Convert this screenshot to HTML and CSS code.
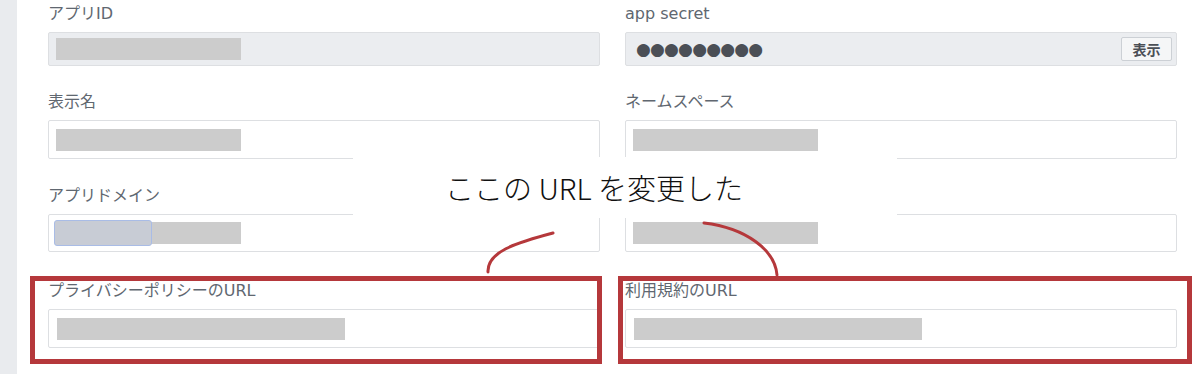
FILE: index.html
```html
<!DOCTYPE html>
<html>
<head>
	<meta charset="UTF-8">
	<title>基本設定</title>
	<link rel="stylesheet" href="styles.css">
</head>
<body>
	<div class="page">
		<div class="side"></div>
		<div class="main">
			<div class="field">
				<div class="label">アプリID</div>
				<div class="input disabled short"><span class="mask"></span></div>
			</div>
			<div class="field">
				<div class="label">app secret</div>
				<div class="input disabled short secret">
					<span class="dots">●●●●●●●●●</span>
					<span class="btn">表示</span>
				</div>
			</div>

			<div class="field">
				<div class="label">表示名</div>
				<div class="input"><span class="mask"></span></div>
			</div>
			<div class="field">
				<div class="label">ネームスペース</div>
				<div class="input"><span class="mask"></span></div>
			</div>

			<div class="field r3">
				<div class="label">アプリドメイン</div>
				<div class="input mid"><span class="mask"><span class="sel"></span></span></div>
			</div>
			<div class="field r3">
				<!-- ラベルは注釈の下に隠れている -->
				<div class="label"></div>
				<div class="input mid"><span class="mask"></span></div>
			</div>

			<div class="field r4">
				<div class="label">プライバシーポリシーのURL</div>
				<div class="input url"><span class="mask long"></span></div>
			</div>
			<div class="field r4">
				<div class="label">利用規約のURL</div>
				<div class="input url"><span class="mask long"></span></div>
			</div>
		</div>

		<!-- 注釈 -->
		<div class="callout">ここの URL を変更した</div>
		<div class="mark mark-left"></div>
		<div class="mark mark-right"></div>
		<svg class="arcs" width="1200" height="374" viewBox="0 0 1200 374">
			<path d="M553 233 C515 243 487 252 488 272" />
			<path d="M704 223 C746 228 775 250 777 275" />
		</svg>
	</div>
</body>
</html>
```

FILE: styles.css
```css
body{
	margin: 0;
	padding: 0;
	background: #fff;
}
.page{
	width: 1200px;
	height: 374px;
	position: relative;
	overflow: hidden;
	display: flex;
	font-family: "DejaVu Sans", "Noto Sans CJK JP", sans-serif;
}
.side{
	width: 17px;
	flex: none;
	background: #e9ebee;
}
.main{
	padding: 5px 23px 0 31px;
	display: grid;
	grid-template-columns: 552px 552px;
	column-gap: 25px;
	row-gap: 27px;
	align-content: start;
}
.field .label{
	font-size: 16px;
	line-height: 18px;
	height: 18px;
	margin-bottom: 9px;
	color: #606770;
	white-space: nowrap;
}
.r3{
	margin-top: 1px;
}
.r4{
	margin-top: 3px;
}
.input{
	height: 39px;
	box-sizing: border-box;
	border: 1px solid #dddfe2;
	border-radius: 2px;
	background: #fff;
	padding: 0 7px;
	display: flex;
	align-items: center;
}
.input.short{
	height: 34px;
}
.input.mid{
	height: 38px;
}
.input.url{
	padding-left: 8px;
}
.input.disabled{
	background: #ebedf0;
}
.mask{
	display: block;
	width: 185px;
	height: 22px;
	background: #cccccc;
}
.mask.long{
	width: 288px;
}
.mask .sel{
	display: block;
	width: 98px;
	height: 26px;
	margin: -2px 0 0 -2px;
	box-sizing: border-box;
	border: 1px solid #a9bce6;
	border-radius: 3px;
	background: #c8ccd5;
}
.secret{
	justify-content: space-between;
	padding: 0 4px 0 10px;
}
.dots{
	font-family: "DejaVu Sans", sans-serif;
	font-size: 17px;
	letter-spacing: -0.8px;
	color: #4b4f56;
	line-height: 20px;
}
.btn{
	width: 51px;
	height: 24px;
	box-sizing: border-box;
	border: 1px solid #ccd0d5;
	border-radius: 2px;
	background: #f5f6f7;
	color: #4b4f56;
	font-family: "Noto Sans CJK JP", sans-serif;
	font-weight: bold;
	font-size: 14px;
	line-height: 22px;
	text-align: center;
}
.callout{
	position: absolute;
	left: 353px;
	top: 157px;
	width: 544px;
	height: 61px;
	box-sizing: border-box;
	padding: 1px 0 0 92px;
	background: #fff;
	font-family: "Noto Sans CJK JP", sans-serif;
	font-weight: 300;
	font-size: 29px;
	line-height: 59px;
	color: #111;
	white-space: nowrap;
}
.mark{
	position: absolute;
	top: 276px;
	height: 88px;
	box-sizing: border-box;
	border: 5px solid #b5383b;
}
.mark-left{
	left: 30px;
	width: 572px;
}
.mark-right{
	left: 618px;
	width: 574px;
}
.arcs{
	position: absolute;
	left: 0;
	top: 0;
	pointer-events: none;
}
.arcs path{
	fill: none;
	stroke: #b5383b;
	stroke-width: 3;
	stroke-linecap: round;
}
```
